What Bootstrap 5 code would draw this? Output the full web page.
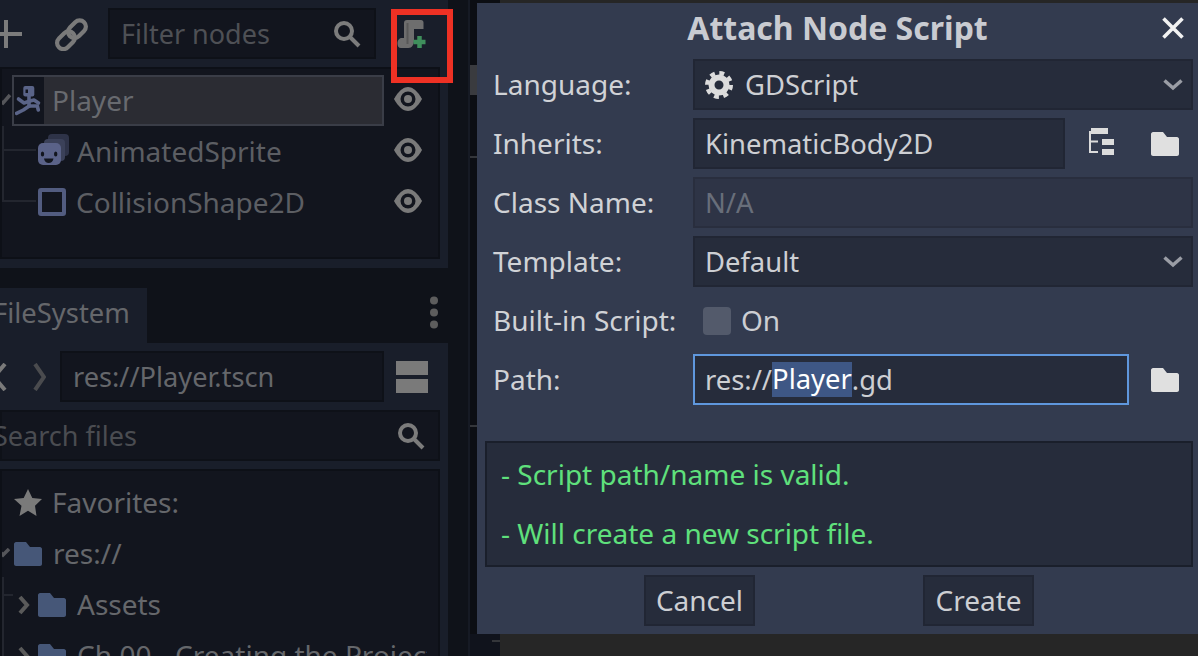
<!DOCTYPE html>
<html lang="en">
<head>
<meta charset="utf-8">
<title>Attach Node Script</title>
<link href="https://cdn.jsdelivr.net/npm/bootstrap@5.3.0/dist/css/bootstrap.min.css" rel="stylesheet">
<style>
html,body{margin:0;height:656px;overflow:hidden;background:#10131c}
body{font-family:"Noto Sans","Open Sans",sans-serif;font-size:28px;line-height:37px;color:#65676b}
svg{display:block;flex:none}
.stage{width:1198px;height:656px;overflow:hidden;position:relative}
.dock{width:448px;flex:none;height:656px;background:#0f1219}
.pane{background:#191e2a}
.top-pane{height:268px;padding:8px 9px 9px 0}
.tool-row{height:51px;margin-bottom:8px}
.add-ico{margin-left:-10px;margin-right:32px}
.dim-input{background:#12151e;border:2px solid #0e1118;height:51px;padding-left:11px;color:#4e5055;white-space:nowrap;overflow:hidden;font-size:27px}
.filter-box{width:268px;margin-left:18px;margin-right:18px}
.well{background:#12151e;border:2px solid #0d1017}
.scene-tree{height:192px;width:440px;position:relative;padding-top:6px}
.tree-line{height:51px;white-space:nowrap}
.sel-row{width:372px;height:51px;margin-left:10px;background:#2b2c33;border:2px solid #3a3d47;color:#686a6f}
.sel-ico{width:30px;height:47px;background:#12151e;margin-right:8px}
.eye1{margin-left:10px;margin-top:-4px}
.child-a{padding-left:36px;color:#5c5e63;position:relative}
.child-a svg.nd{margin-right:8px}
.child-a .eye2{position:absolute;left:392px;top:12px}
.child-a .nd-box{margin-right:10px;margin-top:-2px}
.branch{position:absolute;left:0;top:0;width:36px;height:200px}
.tab-row{height:75px;padding-top:20px}
.tab-on{width:147px;height:55px;background:#191e2a;line-height:50px;overflow:hidden;color:#65676b;font-size:27.4px}
.tab-on span{margin-left:-7px}
.dots{margin-left:282px;margin-top:8px}
.fs-pane{height:313px;padding-top:8px;position:relative}
.path-row{height:51px;margin-bottom:8px}
.path-box{width:324px;margin-left:14px;margin-right:12px;height:51px;font-size:27.2px}
.search-box{width:440px;height:51px;margin-bottom:8px;background:#12151e;border:2px solid #0e1118;color:#4a4c51;font-size:27px}
.search-box span{margin-left:-9px}
.search-box svg{margin-right:13px}
.fs-tree{width:440px;height:200px;padding-top:6px;overflow:hidden;position:relative}
.fs-line{height:51px;white-space:nowrap;position:relative}
.lvl0{padding-left:12px}
.lvl1{padding-left:16px}
.fs-branch{position:absolute;left:0;top:100px;width:16px;height:100px}
.gutter{width:22px;flex:none;height:656px;background:#0f1219;border-right:2px solid #161a24}
.rail{width:30px;flex:none;height:656px;background:#0c0e13;position:relative}
.grab{width:7px;height:30px;margin-top:65px;background:#3a3b3f}
.tick{width:7px;height:2px;background:#34363a;margin-top:61px}
.tick2{margin-top:267px}
.bottom-tick{width:8px;height:2px;background:#34363a;position:absolute;left:22px;top:640px}
.rail-low{position:absolute;left:0;top:634px;width:30px;height:22px;background:#10131c}
.edit{flex:1;height:656px;background:#262626}
.dlg{position:absolute;left:477px;top:3px;width:721px;height:631px;background:#333b4f;color:#ccced3;padding-left:16px}
.dlg-title{height:56px;font-weight:700;text-align:center;margin-left:-16px;line-height:50px;color:#c9cbd1;font-size:32px;position:relative}
.dlg-x{position:absolute;left:685px;top:14px}
.frow{height:51px;margin-bottom:8px}
.flabel{width:200px;flex:none;color:#d0d2d6}
.fctl{height:51px;background:#262c3b;border:2px solid #212634;padding:0 8px 0 10px;color:#cdcfd3;flex:none;white-space:nowrap;font-size:27.4px}
.wide{width:500px}
.mid{width:372px}
.off{background:#2e3446;border-color:#292e3e;color:#686e7a}
.focused{width:436px;border-color:#5f97dd;color:#cdcfd3}
.sel-text{background:#3e5785;color:#fff;display:inline-block;height:35px;line-height:33px}
.tick-box{width:28px;height:28px;background:#535a6b;border-radius:4px;margin:0 10px 0 10px}
.note{width:708px;height:126px;margin:36px 0 8px -8px;background:#262c3b;border:2px solid #1a1f2b;color:#5fe07c;padding:13px 0 0 14px}
.note div{height:59px}
.btn-row{margin-left:-16px;padding-left:3px;gap:168px}
.dbtn{width:111px;height:51px;background:#262c3b;border:2px solid #212634;color:#cdcfd3;font-size:28px;line-height:37px;padding:0;border-radius:0}
.redbox{position:absolute;left:391px;top:9px;width:62px;height:74px;border:6px solid #ee3124}
</style>
</head>
<body>
<div class="stage d-flex">
  <div class="dock d-flex flex-column">
    <div class="pane top-pane">
      <div class="tool-row d-flex align-items-center">
        <svg class="add-ico" width="32" height="28" viewBox="0 0 32 28"><path d="M2 14h30M16 0v28" stroke="#7c7c7c" stroke-width="4"/></svg>
        <svg width="36" height="34" viewBox="0 0 36 34"><g fill="none" stroke="#7a7a7a" stroke-width="4.200"><rect x="13" y="6" width="20" height="12.500" rx="6.250" transform="rotate(-45 23 12.250)"/><rect x="2" y="17" width="20" height="12.500" rx="6.250" transform="rotate(-45 12 23.250)"/></g></svg>
        <div class="dim-input filter-box d-flex align-items-center justify-content-between">
          <span>Filter nodes</span>
          <svg style="margin-right:13px" width="28" height="28" viewBox="0 0 28 28"><circle cx="11" cy="11" r="8" fill="none" stroke="#7c7c7c" stroke-width="4"/><path d="M17 17l9 9" stroke="#7c7c7c" stroke-width="4"/></svg>
        </div>
        <svg width="36" height="38" viewBox="0 0 36 38"><path d="M13 5h14c1.500 0 2.500 1 2.500 2.500V14H20v11c0 4.500-2 8-5.500 8H7c-2.500 0-3.500-2-3.500-4.500C3.500 25 5.500 23 8 23h2V8c0-2 1-3 3-3z" fill="#6e6e6e"/><path d="M13.500 8v21" stroke="#585858" stroke-width="2"/><path d="M25.500 21v12M19.500 27h12" stroke="#3f8f5c" stroke-width="4.500"/></svg>
      </div>
      <div class="well scene-tree">
        <svg class="branch" viewBox="0 0 36 200"><path d="M1 57v76M0 81h34M0 132h34" stroke="#23262f" stroke-width="2" fill="none"/><path d="M-4 31l5 3 7-8" fill="none" stroke="#55565a" stroke-width="3.500"/></svg>
        <div class="d-flex align-items-center tree-line">
          <div class="sel-row d-flex align-items-center">
            <div class="sel-ico d-flex align-items-center justify-content-center">
              <svg width="28" height="30" viewBox="0 0 28 30"><rect x="8.300" y="0" width="11" height="10.500" rx="2" fill="#5a6488"/><rect x="10.500" y="3.500" width="2.500" height="3.500" fill="#12151e"/><g fill="none" stroke="#5a6488" stroke-width="3.600" stroke-linecap="round" stroke-linejoin="round"><path d="M14 9v11"/><path d="M3.500 13L9 17l6-2 4-1 4.500 3"/><path d="M14.300 20L8.300 24 1.500 27.300"/><path d="M14.300 20h8l1 4"/></g></svg>
            </div>
            <span>Player</span>
          </div>
          <svg class="eye1" width="28" height="24" viewBox="0 0 28 24"><path d="M14 0C6 0 0 12 0 12s6 12 14 12 14-12 14-12S22 0 14 0z" fill="#7a7a7a"/><circle cx="14" cy="12" r="7.500" fill="#12151e"/><circle cx="14" cy="12" r="4" fill="#7a7a7a"/></svg>
        </div>
        <div class="d-flex align-items-center tree-line child-a">
          <svg class="nd" style="margin-top:-4px" width="31" height="31" viewBox="0 0 31 31"><rect x="10" y="0" width="21" height="22" rx="4" fill="#2e3348"/><rect x="6" y="5" width="21" height="22" rx="4" fill="#3b4159"/><rect x="0" y="9" width="23" height="22" rx="5" fill="#5a6288"/><ellipse cx="4.500" cy="20" rx="1.700" ry="2.500" fill="#12151e"/><ellipse cx="17.700" cy="20" rx="1.700" ry="2.500" fill="#12151e"/><path d="M6 24.500h9.500c-.5 3-2.500 4.500-4.800 4.500S6.500 27.500 6 24.500z" fill="#12151e"/></svg>
          <span>AnimatedSprite</span>
          <svg class="eye2" width="28" height="24" viewBox="0 0 28 24"><path d="M14 0C6 0 0 12 0 12s6 12 14 12 14-12 14-12S22 0 14 0z" fill="#7a7a7a"/><circle cx="14" cy="12" r="7.500" fill="#12151e"/><circle cx="14" cy="12" r="4" fill="#7a7a7a"/></svg>
        </div>
        <div class="d-flex align-items-center tree-line child-a">
          <svg class="nd-box" width="28" height="28" viewBox="0 0 28 28"><rect x="2" y="2" width="24" height="24" rx="1" fill="none" stroke="#525c80" stroke-width="4"/></svg>
          <span>CollisionShape2D</span>
          <svg class="eye2" width="28" height="24" viewBox="0 0 28 24"><path d="M14 0C6 0 0 12 0 12s6 12 14 12 14-12 14-12S22 0 14 0z" fill="#7a7a7a"/><circle cx="14" cy="12" r="7.500" fill="#12151e"/><circle cx="14" cy="12" r="4" fill="#7a7a7a"/></svg>
        </div>
      </div>
    </div>
    <div class="tab-row d-flex">
      <div class="tab-on"><span>FileSystem</span></div>
      <svg class="dots" width="10" height="34" viewBox="0 0 10 34"><g fill="#5d5d5d"><circle cx="5" cy="4.500" r="4"/><circle cx="5" cy="16.500" r="4"/><circle cx="5" cy="28.500" r="4"/></g></svg>
    </div>
    <div class="pane fs-pane">
      <div class="path-row d-flex align-items-center">
        <svg width="46" height="28" viewBox="0 0 46 28"><path d="M5 1L-6 14 5 27" fill="none" stroke="#7a7a7a" stroke-width="4"/><path d="M35 1l9 13-9 13" fill="none" stroke="#4a4b4e" stroke-width="4"/></svg>
        <div class="dim-input path-box d-flex align-items-center" style="color:#65676b">res://Player.tscn</div>
        <svg width="32" height="32" viewBox="0 0 32 32"><path d="M0 0h32v14H0zM0 18h32v14H0z" fill="#7a7a7a"/></svg>
      </div>
      <div class="search-box d-flex align-items-center justify-content-between">
        <span>Search files</span>
        <svg width="28" height="28" viewBox="0 0 28 28"><circle cx="11" cy="11" r="8" fill="none" stroke="#7c7c7c" stroke-width="4"/><path d="M17 17l9 9" stroke="#7c7c7c" stroke-width="4"/></svg>
      </div>
      <div class="well fs-tree">
        <svg class="fs-branch" viewBox="0 0 16 100"><path d="M1 6v94M0 24h11" stroke="#23262f" stroke-width="2" fill="none"/></svg>
        <div class="fs-line d-flex align-items-center lvl0">
          <svg width="28" height="27" viewBox="0 0 28 27" style="margin-right:10px"><path d="M14 0l4.300 9 9.700 1-7 6.800L22.500 27 14 21.800 5.500 27l2-10.200L0 10l9.700-1z" fill="#7a7a7a"/></svg>
          <span>Favorites:</span>
        </div>
        <div class="fs-line d-flex align-items-center lvl0">
          <svg class="position-absolute" style="left:-4px;top:20px" width="12" height="12" viewBox="0 0 12 12"><path d="M1 3l4 4 6-6" fill="none" stroke="#55565a" stroke-width="3.500"/></svg>
          <svg width="28" height="24" viewBox="0 0 28 24" style="margin-right:11px"><path d="M2 0h10l4 5h10c1 0 2 1 2 2v15c0 1-1 2-2 2H2c-1 0-2-1-2-2V2C0 1 1 0 2 0z" fill="#465778"/></svg>
          <span>res://</span>
        </div>
        <div class="fs-line d-flex align-items-center lvl1">
          <svg width="20" height="20" viewBox="0 0 20 20"><path d="M2 2l7 8-7 8" fill="none" stroke="#5a5a5a" stroke-width="4"/></svg>
          <svg width="28" height="24" viewBox="0 0 28 24" style="margin-right:11px"><path d="M2 0h10l4 5h10c1 0 2 1 2 2v15c0 1-1 2-2 2H2c-1 0-2-1-2-2V2C0 1 1 0 2 0z" fill="#465778"/></svg>
          <span>Assets</span>
        </div>
        <div class="fs-line d-flex align-items-center lvl1" style="width:425px;overflow:hidden">
          <svg width="20" height="20" viewBox="0 0 20 20"><path d="M2 2l7 8-7 8" fill="none" stroke="#5a5a5a" stroke-width="4"/></svg>
          <svg width="28" height="24" viewBox="0 0 28 24" style="margin-right:11px"><path d="M2 0h10l4 5h10c1 0 2 1 2 2v15c0 1-1 2-2 2H2c-1 0-2-1-2-2V2C0 1 1 0 2 0z" fill="#465778"/></svg>
          <span>Ch.00 - Creating the Project</span>
        </div>
      </div>
    </div>
  </div>
  <div class="gutter"></div>
  <div class="rail">
    <div class="grab"></div>
    <div class="tick"></div>
    <div class="tick tick2"></div>
    <div class="rail-low"></div>
    <div class="bottom-tick"></div>
  </div>
  <div class="edit"></div>

  <div class="redbox"></div>

  <div class="dlg">
    <div class="dlg-title">Attach Node Script
      <svg class="dlg-x" width="22" height="22" viewBox="0 0 22 22"><path d="M1.500 1.500l19 19M20.500 1.500l-19 19" stroke="#f2f2f2" stroke-width="3.600"/></svg>
    </div>
    <div class="frow d-flex align-items-center">
      <div class="flabel">Language:</div>
      <div class="fctl wide d-flex align-items-center justify-content-between">
        <span class="d-flex align-items-center">
          <svg width="28" height="28" viewBox="0 0 28 28" style="margin-right:12px"><circle cx="14" cy="14" r="7.500" fill="none" stroke="#dcdcdc" stroke-width="6"/><circle cx="14" cy="14" r="12" fill="none" stroke="#dcdcdc" stroke-width="4" stroke-dasharray="4.900 4.520"/></svg>
          GDScript
        </span>
        <svg width="20" height="12" viewBox="0 0 20 12"><path d="M1.500 1.500L10 9l8.500-7.500" fill="none" stroke="#9a9da5" stroke-width="3.500"/></svg>
      </div>
    </div>
    <div class="frow d-flex align-items-center">
      <div class="flabel">Inherits:</div>
      <div class="fctl mid d-flex align-items-center">KinematicBody2D</div>
      <svg width="28" height="27" viewBox="0 0 28 27" style="margin-left:21px;margin-top:-4px"><path d="M4 3v21h8M4 13.500h8" fill="none" stroke="#dcdcdc" stroke-width="2"/><path d="M5 0h17v6H5zM16 11h12v6H16zM16 21h12v6H16z" fill="#dcdcdc"/></svg>
      <svg width="28" height="24" viewBox="0 0 28 24" style="margin-left:37px"><path d="M2 0h10l4 5h10c1 0 2 1 2 2v15c0 1-1 2-2 2H2c-1 0-2-1-2-2V2C0 1 1 0 2 0z" fill="#e0e0e0"/></svg>
    </div>
    <div class="frow d-flex align-items-center">
      <div class="flabel">Class Name:</div>
      <div class="fctl wide off d-flex align-items-center">N/A</div>
    </div>
    <div class="frow d-flex align-items-center">
      <div class="flabel">Template:</div>
      <div class="fctl wide d-flex align-items-center justify-content-between">
        <span>Default</span>
        <svg width="20" height="12" viewBox="0 0 20 12"><path d="M1.500 1.500L10 9l8.500-7.500" fill="none" stroke="#9a9da5" stroke-width="3.500"/></svg>
      </div>
    </div>
    <div class="frow d-flex align-items-center">
      <div class="flabel">Built-in Script:</div>
      <div class="tick-box"></div>
      <span>On</span>
    </div>
    <div class="frow d-flex align-items-center" style="margin-bottom:0">
      <div class="flabel">Path:</div>
      <div class="fctl focused d-flex align-items-center">res://<span class="sel-text">Player</span>.gd</div>
      <svg width="28" height="24" viewBox="0 0 28 24" style="margin-left:22px"><path d="M2 0h10l4 5h10c1 0 2 1 2 2v15c0 1-1 2-2 2H2c-1 0-2-1-2-2V2C0 1 1 0 2 0z" fill="#e0e0e0"/></svg>
    </div>
    <div class="note">
      <div>- Script path/name is valid.</div>
      <div>- Will create a new script file.</div>
    </div>
    <div class="btn-row d-flex justify-content-center">
      <button type="button" class="btn dbtn">Cancel</button>
      <button type="button" class="btn dbtn">Create</button>
    </div>
  </div>
</div>
</body>
</html>
